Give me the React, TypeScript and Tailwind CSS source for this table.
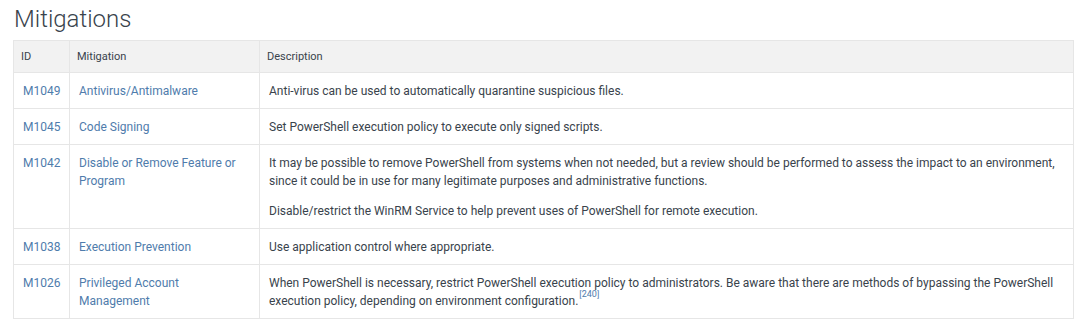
import React from "react";

type Row = { id: string; name: React.ReactNode; desc: React.ReactNode };

const link = "text-[#4f7cac]";

const rows: Row[] = [
  {
    id: "M1049",
    name: "Antivirus/Antimalware",
    desc: <p>Anti-virus can be used to automatically quarantine suspicious files.</p>,
  },
  {
    id: "M1045",
    name: "Code Signing",
    desc: <p>Set PowerShell execution policy to execute only signed scripts.</p>,
  },
  {
    id: "M1042",
    name: "Disable or Remove Feature or Program",
    desc: (
      <>
        <p className="mb-[12px]">
          It may be possible to remove PowerShell from systems when not needed, but a review should be performed to
          assess the impact to an environment, since it could be in use for many legitimate purposes and administrative
          functions.
        </p>
        <p>Disable/restrict the WinRM Service to help prevent uses of PowerShell for remote execution.</p>
      </>
    ),
  },
  {
    id: "M1038",
    name: "Execution Prevention",
    desc: <p>Use application control where appropriate.</p>,
  },
  {
    id: "M1026",
    name: "Privileged Account Management",
    desc: (
      <p>
        When PowerShell is necessary, restrict PowerShell execution policy to administrators. Be aware that there are
        methods of bypassing the PowerShell execution policy, depending on environment configuration.
        <sup className={`${link} text-[9px] leading-none align-[4px] ml-[1px]`}>[240]</sup>
      </p>
    ),
  },
];

export default function App() {
  return (
    <div
      className="bg-white w-[1080px] h-[335px] px-[13px] pt-[4px] text-[#39434c]"
      style={{ fontFamily: "Roboto, 'Liberation Sans', sans-serif" }}
    >
      <h2 className="text-[24px] font-light leading-[30px] mb-[6px] pl-[1px]">Mitigations</h2>
      <table className="w-[1061px] table-fixed border-collapse border border-[#e6e6e6] text-[12px] leading-[18px]">
        <colgroup>
          <col className="w-[56px]" />
          <col className="w-[190px]" />
          <col />
        </colgroup>
        <thead>
          <tr className="bg-[#f2f2f2] h-[32px]">
            <th className="border border-[#e6e6e6] px-[7px] text-left font-normal text-[11px] align-middle">ID</th>
            <th className="border border-[#e6e6e6] px-[7px] text-left font-normal text-[11px] align-middle">
              Mitigation
            </th>
            <th className="border border-[#e6e6e6] px-[7px] text-left font-normal text-[11px] align-middle">
              Description
            </th>
          </tr>
        </thead>
        <tbody>
          {rows.map((r) => (
            <tr key={r.id}>
              <td className={`border border-[#e6e6e6] px-[9px] pt-[9px] pb-[8px] align-top ${link}`}>{r.id}</td>
              <td className={`border border-[#e6e6e6] px-[9px] pt-[9px] pb-[8px] align-top ${link}`}>{r.name}</td>
              <td className="border border-[#e6e6e6] px-[9px] pt-[9px] pb-[8px] align-top">{r.desc}</td>
            </tr>
          ))}
        </tbody>
      </table>
    </div>
  );
}
